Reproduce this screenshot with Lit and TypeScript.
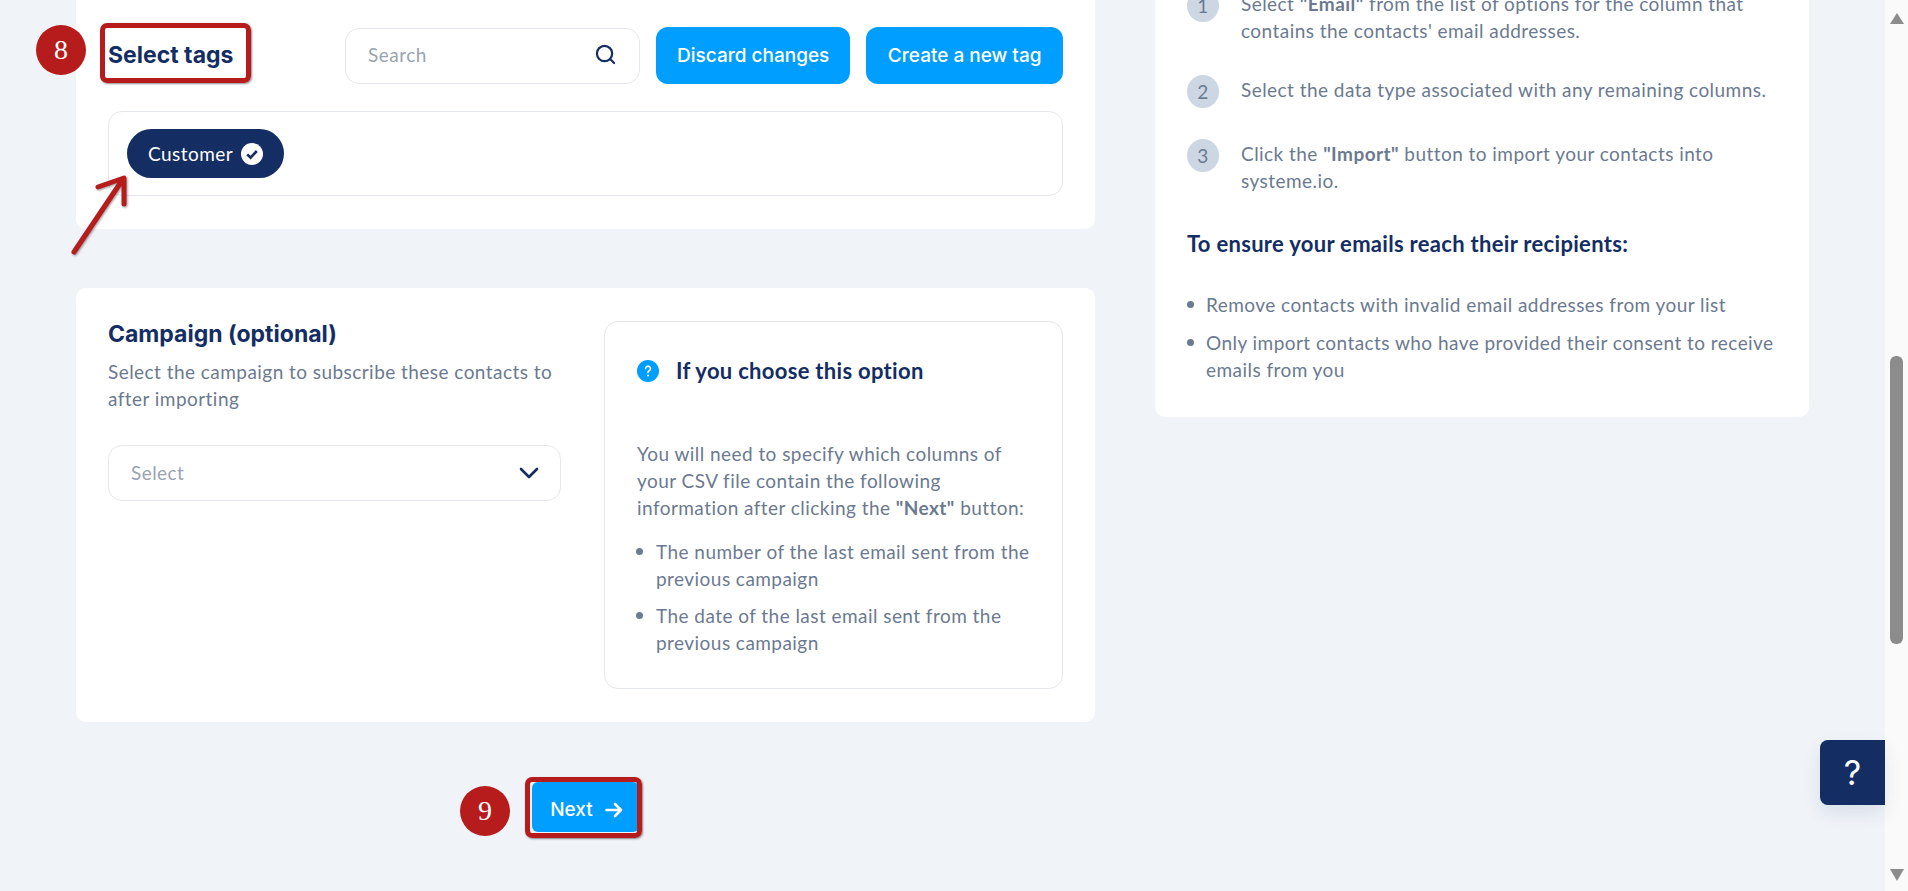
import { LitElement, html, css } from "lit";
import { customElement } from "lit/decorators.js";

@customElement("app-root")
export class AppRoot extends LitElement {
  static styles = css`
    :host {
      display: block;
      position: relative;
      height: 891px;
      overflow: hidden;
      background: #f0f4f9;
      color: #6b7a90;
      font-family: "Lato", "Open Sans", sans-serif;
      font-size: 19px;
      letter-spacing: 0.45px;
      line-height: 27px;
    }
    * { box-sizing: border-box; }
    .page { display: flex; height: 891px; }
    .main {
      flex: 1;
      display: grid;
      grid-template-columns: 1019px 654px;
      column-gap: 60px;
      align-items: start;
      padding-left: 76px;
    }
    .scrollbar {
      width: 23px;
      background: #fafafa;
      display: flex;
      flex-direction: column;
      align-items: center;
      padding-top: 13px;
    }
    .scroll-up, .scroll-down {
      width: 0;
      height: 0;
      border-left: 7.5px solid transparent;
      border-right: 7.5px solid transparent;
    }
    .scroll-up { border-bottom: 11px solid #8c8c8c; }
    .thumb { margin-top: 332px; width: 13px; height: 288px; border-radius: 6px; background: #8c8c8c; }
    .scroll-down { margin-top: 225px; border-top: 12px solid #8c8c8c; }
    .card { background: #fff; border-radius: 0 0 10px 10px; }
    .tags-card { padding: 27px 32px 33px; }
    .tags-head { display: flex; align-items: center; gap: 16px; }
    h2 {
      margin: 0;
      font: 700 23px/30px "Inter", sans-serif;
      letter-spacing: 0;
      color: #142d63;
    }
    .tags-head h2 { flex: 1; margin-top: -2px; }
    .search {
      width: 295px;
      height: 56px;
      display: flex;
      align-items: center;
      justify-content: space-between;
      padding: 0 23px 2px 22px;
      border: 1px solid #e4e7ec;
      border-radius: 14px;
      color: #9aa3af;
    }
    .btn {
      display: flex;
      align-items: center;
      justify-content: center;
      height: 57px;
      padding: 0 21.5px;
      border: 0;
      border-radius: 12px;
      background: #009eff;
      color: #fff;
      font: 500 19px/24px "Inter", sans-serif;
      letter-spacing: 0;
    }
    .btn.discard { padding: 0 21px; }
    .tag-box {
      margin-top: 27px;
      height: 85px;
      padding: 17px 18px;
      border: 1px solid #e4e7ec;
      border-radius: 14px;
    }
    .chip {
      display: inline-flex;
      align-items: center;
      gap: 8px;
      height: 49px;
      padding: 0 21px;
      border-radius: 25px;
      background: #142d63;
      color: #fff;
    }
    .campaign-card {
      margin-top: 59px;
      border-radius: 10px;
      height: 434px;
      padding: 33px 32px;
      display: grid;
      grid-template-columns: 453px 459px;
      column-gap: 43px;
      align-items: start;
    }
    .campaign-card h2 { margin-top: -2px; }
    .intro { margin: 9px 0 0; }
    .select {
      margin-top: 33px;
      height: 56px;
      display: flex;
      align-items: center;
      justify-content: space-between;
      padding: 0 21px 0 22px;
      border: 1px solid #e4e7ec;
      border-radius: 14px;
      color: #9aa3af;
    }
    .select span { margin-top: -2px; }
    .info {
      height: 368px;
      padding: 34px 27px 33px 32px;
      border: 1px solid #e4e7ec;
      border-radius: 14px;
    }
    .info-head { display: flex; align-items: center; gap: 17px; }
    h3 {
      margin: 0;
      font-family: "Lato", sans-serif;
      font-size: 22px;
      line-height: 30px;
      font-weight: 700;
      letter-spacing: 0.3px;
      color: #142d63;
    }
    .info-text { margin: 54px 0 0; }
    strong { font-weight: 700; }
    ul { margin: 0; padding: 0; list-style: none; }
    li { position: relative; }
    li::before {
      content: "";
      position: absolute;
      width: 7px;
      height: 7px;
      border-radius: 50%;
      background: #6b7a90;
      top: 10px;
    }
    .info ul { margin-top: 17px; display: grid; row-gap: 10px; }
    .info li { padding-left: 19px; }
    .info li::before { left: -1px; }
    .next-row { display: flex; justify-content: center; margin-top: 60px; }
    .next { width: 107px; height: 50px; padding: 5px 0 0 2px; gap: 12px; border-radius: 6px; }
    .side-card { padding: 0 32px; height: 417px; }
    .steps { margin-top: -11px; display: grid; }
    .step { display: flex; gap: 22px; }
    .step + .step { margin-top: 31px; }
    .num {
      flex: none;
      width: 32px;
      height: 33px;
      border-radius: 50%;
      background: #cdd6e3;
      display: flex;
      align-items: center;
      justify-content: center;
      font-size: 19px;
    }
    .txt { padding-top: 1px; }
    .side-card h3 { margin-top: 35px; }
    .side-card ul { margin-top: 32px; display: grid; row-gap: 11px; }
    .side-card li { padding-left: 19px; }
    .side-card li::before { left: 0; }
    .help {
      position: absolute;
      left: 1820px;
      top: 740px;
      width: 65px;
      height: 65px;
      display: flex;
      align-items: center;
      justify-content: center;
      border-radius: 8px 0 0 8px;
      background: #142d63;
      color: #fff;
      font: 400 34px/1 "Inter", sans-serif;
      letter-spacing: 0;
      box-shadow: 0 8px 18px rgba(20, 45, 99, 0.1);
    }
    .mark {
      position: absolute;
      width: 50px;
      height: 50px;
      display: flex;
      align-items: center;
      justify-content: center;
      border-radius: 50%;
      background: #b71c1c;
      color: #fff;
      font: 400 28px/1 "Liberation Serif", serif;
      letter-spacing: 0;
    }
    .frame {
      position: absolute;
      border: 5px solid #b71c1c;
      border-radius: 7px;
      box-shadow: 1px 1px 2px rgba(0, 0, 0, 0.45);
    }
    .pointer {
      position: absolute;
      left: 60px;
      top: 165px;
      filter: drop-shadow(1px 1px 1px rgba(0, 0, 0, 0.4));
    }
  `;

  render() {
    return html`
      <div class="page">
        <div class="main">
          <div class="left">
            <section class="card tags-card">
              <div class="tags-head">
                <h2>Select tags</h2>
                <div class="search">
                  <span>Search</span>
                  <svg width="21" height="21" viewBox="0 0 22 22" fill="none" stroke="#142d63" stroke-width="2.3" stroke-linecap="round">
                    <circle cx="10" cy="10" r="8" />
                    <path d="M15.8 15.8 20 20" />
                  </svg>
                </div>
                <button class="btn discard">Discard changes</button>
                <button class="btn">Create a new tag</button>
              </div>
              <div class="tag-box">
                <span class="chip">
                  Customer
                  <svg width="22" height="22" viewBox="0 0 22 22">
                    <circle cx="11" cy="11" r="11" fill="#fff" />
                    <path d="M6.2 11.3 9.6 14.7 15.8 8" fill="none" stroke="#142d63" stroke-width="2.6" />
                  </svg>
                </span>
              </div>
            </section>

            <section class="card campaign-card">
              <div>
                <h2>Campaign (optional)</h2>
                <p class="intro">Select the campaign to subscribe these contacts to after importing</p>
                <div class="select">
                  <span>Select</span>
                  <svg width="20" height="12" viewBox="0 0 20 12" fill="none" stroke="#142d63" stroke-width="2.6" stroke-linecap="round" stroke-linejoin="round">
                    <path d="M2 2 10 10 18 2" />
                  </svg>
                </div>
              </div>
              <div class="info">
                <div class="info-head">
                  <svg width="22" height="22" viewBox="0 0 22 22">
                    <circle cx="11" cy="11" r="11" fill="#009eff" />
                    <path d="M8.6 8.6a2.4 2.4 0 1 1 3.6 2.1c-.8.5-1.2.9-1.2 1.8" fill="none" stroke="#fff" stroke-width="1.6" stroke-linecap="round" />
                    <circle cx="11" cy="15.6" r="1" fill="#fff" />
                  </svg>
                  <h3>If you choose this option</h3>
                </div>
                <p class="info-text">You will need to specify which columns of your CSV file contain the following information after clicking the <strong>"Next"</strong> button:</p>
                <ul>
                  <li>The number of the last email sent from the previous campaign</li>
                  <li>The date of the last email sent from the previous campaign</li>
                </ul>
              </div>
            </section>

            <div class="next-row">
              <button class="btn next">
                Next
                <svg width="18" height="16" viewBox="0 0 18 16" fill="none" stroke="#fff" stroke-width="2.6" stroke-linecap="round" stroke-linejoin="round">
                  <path d="M1.5 8H16M10 2l6 6-6 6" />
                </svg>
              </button>
            </div>
          </div>

          <aside class="card side-card">
            <div class="steps">
              <div class="step">
                <span class="num">1</span>
                <span class="txt">Select <strong>"Email"</strong> from the list of options for the column that contains the contacts' email addresses.</span>
              </div>
              <div class="step">
                <span class="num">2</span>
                <span class="txt">Select the data type associated with any remaining columns.</span>
              </div>
              <div class="step">
                <span class="num">3</span>
                <span class="txt">Click the <strong>"Import"</strong> button to import your contacts into systeme.io.</span>
              </div>
            </div>
            <h3>To ensure your emails reach their recipients:</h3>
            <ul>
              <li>Remove contacts with invalid email addresses from your list</li>
              <li>Only import contacts who have provided their consent to receive emails from you</li>
            </ul>
          </aside>
        </div>
        <div class="scrollbar">
          <div class="scroll-up"></div>
          <div class="thumb"></div>
          <div class="scroll-down"></div>
        </div>
      </div>

      <div class="help">?</div>

      <div class="mark" style="left:36px;top:25px">8</div>
      <div class="frame" style="left:100px;top:23px;width:151px;height:60px"></div>
      <div class="mark" style="left:460px;top:786px">9</div>
      <div class="frame" style="left:525px;top:777px;width:117px;height:61px"></div>
      <svg class="pointer" width="80" height="95" viewBox="0 0 80 95" fill="none" stroke="#b71c1c" stroke-width="5" stroke-linecap="round" stroke-linejoin="round">
        <path d="M14 87 63 14M38 22 64 13 64 39" />
      </svg>
    `;
  }
}
